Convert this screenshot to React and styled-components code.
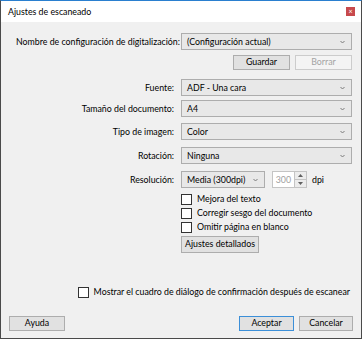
import styled, { createGlobalStyle } from 'styled-components';

const Global = createGlobalStyle`
  body {
    margin: 0;
    background: #f0f0f0;
  }
`;

const Window = styled.div`
  width: 362px;
  height: 339px;
  box-sizing: border-box;
  border: 1px solid #4a4a4a;
  border-top: 1px solid #2a7fcf;
  background: #f0f0f0;
  font-family: Lato, "Noto Sans", sans-serif;
  font-size: 8.8px;
  line-height: 14px;
  color: #000;
  display: flex;
  flex-direction: column;
  white-space: nowrap;
`;

const TitleBar = styled.div`
  height: 21px;
  background: #fff;
  display: flex;
  align-items: center;
  justify-content: space-between;
  padding: 0 4px 0 7px;
`;

const Title = styled.span`
  font-size: 8.8px;
`;

const CloseBox = styled.div`
  width: 9px;
  height: 9px;
  background: #c7494c;
  margin-right: 2px;
  display: flex;
  align-items: center;
  justify-content: center;
  color: #fff;
  font-size: 7px;
  line-height: 1;
`;

const Body = styled.div`
  flex: 1;
  display: flex;
  flex-direction: column;
  padding: 11px 8px 7px 8px;
`;

const Grid = styled.div`
  display: grid;
  grid-template-columns: 165px 171px;
  column-gap: 7px;
  align-items: center;
`;

const Label = styled.label`
  justify-self: ${p => (p.$left ? 'start' : 'end')};
  padding-left: ${p => (p.$left ? '7px' : '0')};
  margin-top: ${p => p.$mt || 0}px;
`;

const Control = styled.div`
  margin-top: ${p => p.$mt || 0}px;
  display: flex;
  align-items: center;
`;

const Select = styled.div`
  box-sizing: border-box;
  width: ${p => p.$w || 171}px;
  height: 17px;
  border: 1px solid #adadad;
  background: #e8e8e8;
  display: flex;
  align-items: center;
  justify-content: space-between;
  padding: 0 6px 0 5px;
`;

const Chevron = () => (
  <svg width="5" height="4" viewBox="0 0 5 4">
    <polyline points="0.5,1 2.5,3 4.5,1" fill="none" stroke="#7a7a7a" strokeWidth="1" />
  </svg>
);

const ButtonRow = styled.div`
  grid-column: 2;
  display: flex;
  justify-content: flex-end;
  gap: 5px;
  margin-top: 5px;
`;

const Button = styled.button`
  box-sizing: border-box;
  width: ${p => p.$w || 57}px;
  height: 15px;
  padding: 0;
  font-family: inherit;
  font-size: 8.8px;
  line-height: 1;
  white-space: nowrap;
  color: ${p => (p.$disabled ? '#a3a3a3' : '#000')};
  background: ${p => (p.$disabled ? '#f4f4f4' : '#e1e1e1')};
  border: 1px solid ${p => (p.$disabled ? '#cccccc' : p.$primary ? '#3c8fd8' : '#adadad')};
`;

const Spin = styled.div`
  box-sizing: border-box;
  width: 35px;
  height: 17px;
  margin-left: 7px;
  border: 1px solid #c4c4c4;
  background: #fff;
  display: flex;
`;

const SpinValue = styled.span`
  flex: 1;
  text-align: right;
  color: #a0a0a0;
  padding-right: 3px;
  line-height: 15px;
`;

const SpinArrows = styled.div`
  width: 11px;
  border-left: 1px solid #c4c4c4;
  display: flex;
  flex-direction: column;
`;

const SpinHalf = styled.div`
  flex: 1;
  display: flex;
  align-items: center;
  justify-content: center;
  border-top: ${p => (p.$bottom ? '1px solid #c4c4c4' : 'none')};
  background: #ececec;
`;

const Unit = styled.span`
  margin-left: 5px;
`;

const CheckList = styled.div`
  grid-column: 2;
  display: flex;
  flex-direction: column;
  align-items: flex-start;
  margin-top: 4px;
`;

const CheckRow = styled.label`
  display: flex;
  align-items: center;
  height: 14px;
  gap: 5px;
`;

const Box = styled.span`
  box-sizing: border-box;
  width: 11px;
  height: 11px;
  border: 1px solid #333;
  background: #fff;
`;

const DetailButton = styled(Button)`
  width: 78px;
  height: 17px;
  margin-top: 2px;
`;

const ConfirmRow = styled.div`
  margin-top: auto;
  display: flex;
  justify-content: flex-end;
  padding-right: 3px;
`;

const Footer = styled.div`
  display: flex;
  justify-content: space-between;
  align-items: center;
  margin-top: 17px;
`;

const FooterRight = styled.div`
  display: flex;
  gap: 5px;
`;

const Triangle = ({ up }) => (
  <svg width="5" height="3" viewBox="0 0 5 3">
    <polygon points={up ? '0,3 5,3 2.5,0' : '0,0 5,0 2.5,3'} fill="#606060" />
  </svg>
);

const Check = ({ children }) => (
  <CheckRow>
    <Box />
    <span>{children}</span>
  </CheckRow>
);

export default function App() {
  return (
    <>
      <Global />
      <Window>
        <TitleBar>
          <Title>Ajustes de escaneado</Title>
          <CloseBox>×</CloseBox>
        </TitleBar>
        <Body>
          <Grid>
            <Label $left>Nombre de configuración de digitalización:</Label>
            <Control>
              <Select>(Configuración actual)<Chevron /></Select>
            </Control>
            <ButtonRow>
              <Button>Guardar</Button>
              <Button $disabled>Borrar</Button>
            </ButtonRow>

            <Label $mt={9}>Fuente:</Label>
            <Control $mt={9}>
              <Select>ADF - Una cara<Chevron /></Select>
            </Control>
            <Label $mt={4}>Tamaño del documento:</Label>
            <Control $mt={4}>
              <Select>A4<Chevron /></Select>
            </Control>
            <Label $mt={6}>Tipo de imagen:</Label>
            <Control $mt={6}>
              <Select>Color<Chevron /></Select>
            </Control>
            <Label $mt={7}>Rotación:</Label>
            <Control $mt={7}>
              <Select>Ninguna<Chevron /></Select>
            </Control>
            <Label $mt={7}>Resolución:</Label>
            <Control $mt={7}>
              <Select $w={84}>Media (300dpi)<Chevron /></Select>
              <Spin>
                <SpinValue>300</SpinValue>
                <SpinArrows>
                  <SpinHalf><Triangle up /></SpinHalf>
                  <SpinHalf $bottom><Triangle /></SpinHalf>
                </SpinArrows>
              </Spin>
              <Unit>dpi</Unit>
            </Control>
            <CheckList>
              <Check>Mejora del texto</Check>
              <Check>Corregir sesgo del documento</Check>
              <Check>Omitir página en blanco</Check>
              <DetailButton>Ajustes detallados</DetailButton>
            </CheckList>
          </Grid>

          <ConfirmRow>
            <Check>Mostrar el cuadro de diálogo de confirmación después de escanear</Check>
          </ConfirmRow>

          <Footer>
            <Button $w={56}>Ayuda</Button>
            <FooterRight>
              <Button $w={55} $primary>Aceptar</Button>
              <Button $w={54}>Cancelar</Button>
            </FooterRight>
          </Footer>
        </Body>
      </Window>
    </>
  );
}
